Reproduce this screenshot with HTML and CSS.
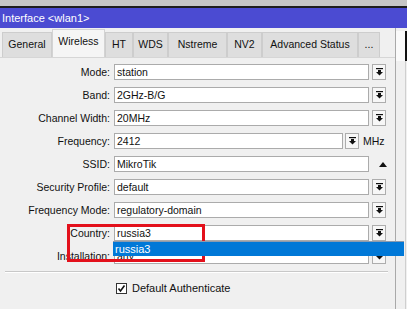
FILE: index.html
```html
<!DOCTYPE html>
<html lang="en">
<head>
  <meta charset="UTF-8">
  <meta name="viewport" content="width=device-width, initial-scale=1.0">
  <title>Interface &lt;wlan1&gt;</title>
  <link rel="stylesheet" href="styles.css">
</head>
<body>
  <div class="top-strip"></div>
  <div class="title-bar">Interface &lt;wlan1&gt;</div>

  <div class="window">
    <div class="main">
      <div class="tabs">
        <div class="tab tab-general">General</div>
        <div class="tab tab-wireless active">Wireless</div>
        <div class="tab tab-ht">HT</div>
        <div class="tab tab-wds">WDS</div>
        <div class="tab tab-nstreme">Nstreme</div>
        <div class="tab tab-nv2">NV2</div>
        <div class="tab tab-adv">Advanced Status</div>
        <div class="tab tab-more">...</div>
      </div>

      <div class="panel">
        <div class="form-row">
          <span class="label">Mode:</span>
          <span class="field">station</span>
          <span class="drop-btn"><svg width="7" height="8" viewBox="0 0 7 8"><rect x="0" y="0" width="7" height="1.2"/><rect x="2" y="2" width="3" height="2"/><polygon points="0,4 7,4 3.5,7.5"/></svg></span>
        </div>
        <div class="form-row">
          <span class="label">Band:</span>
          <span class="field">2GHz-B/G</span>
          <span class="drop-btn"><svg width="7" height="8" viewBox="0 0 7 8"><rect x="0" y="0" width="7" height="1.2"/><rect x="2" y="2" width="3" height="2"/><polygon points="0,4 7,4 3.5,7.5"/></svg></span>
        </div>
        <div class="form-row">
          <span class="label">Channel Width:</span>
          <span class="field">20MHz</span>
          <span class="drop-btn"><svg width="7" height="8" viewBox="0 0 7 8"><rect x="0" y="0" width="7" height="1.2"/><rect x="2" y="2" width="3" height="2"/><polygon points="0,4 7,4 3.5,7.5"/></svg></span>
        </div>
        <div class="form-row">
          <span class="label">Frequency:</span>
          <span class="field field-short">2412</span>
          <span class="drop-btn drop-btn-near"><svg width="7" height="8" viewBox="0 0 7 8"><rect x="0" y="0" width="7" height="1.2"/><rect x="2" y="2" width="3" height="2"/><polygon points="0,4 7,4 3.5,7.5"/></svg></span>
          <span class="unit">MHz</span>
        </div>
        <div class="form-row">
          <span class="label">SSID:</span>
          <span class="field">MikroTik</span>
          <span class="up-arrow"><svg width="8" height="5" viewBox="0 0 8 5"><polygon points="0,5 8,5 4,0"/></svg></span>
        </div>
        <div class="form-row">
          <span class="label">Security Profile:</span>
          <span class="field">default</span>
          <span class="drop-btn"><svg width="7" height="8" viewBox="0 0 7 8"><rect x="0" y="0" width="7" height="1.2"/><rect x="2" y="2" width="3" height="2"/><polygon points="0,4 7,4 3.5,7.5"/></svg></span>
        </div>
        <div class="form-row">
          <span class="label">Frequency Mode:</span>
          <span class="field">regulatory-domain</span>
          <span class="drop-btn"><svg width="7" height="8" viewBox="0 0 7 8"><rect x="0" y="0" width="7" height="1.2"/><rect x="2" y="2" width="3" height="2"/><polygon points="0,4 7,4 3.5,7.5"/></svg></span>
        </div>
        <div class="form-row">
          <span class="label">Country:</span>
          <span class="field">russia3</span>
          <span class="drop-btn"><svg width="7" height="8" viewBox="0 0 7 8"><rect x="0" y="0" width="7" height="1.2"/><rect x="2" y="2" width="3" height="2"/><polygon points="0,4 7,4 3.5,7.5"/></svg></span>
        </div>
        <div class="form-row">
          <span class="label">Installation:</span>
          <span class="field">any</span>
          <span class="drop-btn"><svg width="7" height="8" viewBox="0 0 7 8"><rect x="0" y="0" width="7" height="1.2"/><rect x="2" y="2" width="3" height="2"/><polygon points="0,4 7,4 3.5,7.5"/></svg></span>
        </div>

        <div class="separator"></div>

        <div class="check-row">
          <span class="checkbox"><svg width="9" height="9" viewBox="0 0 9 9"><polyline points="1.5,4.5 3.5,7 7.5,1.5" fill="none" stroke="#111" stroke-width="1.6"/></svg></span>
          <span>Default Authenticate</span>
        </div>
      </div>
    </div>

    <div class="side">
      <div class="side-top"></div>
      <div class="side-rest"></div>
    </div>
  </div>

  <div class="callout"></div>
  <div class="dropdown-list">russia3</div>
</body>
</html>
```

FILE: styles.css
```css
body {
  margin: 0;
  width: 407px;
  height: 309px;
  overflow: hidden;
  position: relative;
  background-color: #F0F0F0;
  font-family: "Liberation Sans", Arial, sans-serif;
  font-size: 10.5px;
  color: #111;
}
.top-strip {
  height: 6px;
  background-color: #C6C6C6;
  border-bottom: 2px solid #1E1E1E;
}
.title-bar {
  height: 20px;
  line-height: 20px;
  padding-left: 2px;
  background-color: #4B4BD2;
  color: #FFFFFF;
  font-size: 11px;
}
.window {
  display: flex;
  height: 281px;
}
.main {
  width: 395px;
}
.tabs {
  display: flex;
  align-items: flex-end;
  height: 29px;
  padding-left: 2px;
}
.tab {
  box-sizing: border-box;
  height: 25px;
  line-height: 23px;
  text-align: center;
  background-color: #DEDEDE;
  border: 1px solid #CDCDCD;
  border-bottom: none;
}
.tab.active {
  height: 28px;
  line-height: 22px;
  background-color: #F5F5F5;
  border-color: #D3D3D3;
}
.tab-general { width: 50px; }
.tab-wireless { width: 53px; }
.tab-ht { width: 28px; }
.tab-wds { width: 35px; }
.tab-nstreme { width: 59px; }
.tab-nv2 { width: 35px; }
.tab-adv { width: 96px; }
.tab-more { width: 22px; }
.panel {
  border-top: 1px solid #D6D6D6;
  padding-top: 6px;
}
.form-row {
  display: flex;
  align-items: center;
  height: 16px;
  margin-bottom: 7px;
}
.label {
  width: 110px;
  margin-right: 4px;
  text-align: right;
}
.field {
  box-sizing: border-box;
  width: 255px;
  height: 16px;
  line-height: 14px;
  padding-left: 2px;
  background-color: #FFFFFF;
  border: 1px solid #ABABAB;
}
.field-short {
  width: 229px;
}
.drop-btn {
  box-sizing: border-box;
  display: flex;
  align-items: center;
  justify-content: center;
  width: 14px;
  height: 16px;
  margin-left: 3px;
  background-color: #F7F7F7;
  border: 1px solid #ADADAD;
}
.drop-btn svg {
  fill: #111;
}
.drop-btn-near {
  margin-left: 2px;
}
.unit {
  margin-left: 4px;
}
.up-arrow {
  display: flex;
  justify-content: center;
  width: 14px;
  margin-left: 7px;
}
.up-arrow svg {
  fill: #111;
}
.separator {
  height: 1px;
  margin: 0 7px 0 5px;
  background-color: #C8C8C8;
  border-bottom: 1px solid #FFFFFF;
}
.check-row {
  display: flex;
  align-items: center;
  gap: 5px;
  margin-top: 9px;
  padding-left: 116px;
  font-size: 11px;
}
.checkbox {
  box-sizing: border-box;
  display: flex;
  align-items: center;
  justify-content: center;
  width: 11px;
  height: 11px;
  background-color: #FFFFFF;
  border: 1px solid #333333;
}
.side {
  flex: 1;
  border-left: 1px solid #A9A9A9;
  display: flex;
  flex-direction: column;
}
.side-top {
  height: 30px;
  margin-top: 3px;
  background-color: #FAFAFA;
  border-right: 2px solid #111111;
}
.side-rest {
  flex: 1;
  border-right: 1px solid #CFCFCF;
  margin-right: 1px;
}
.callout {
  position: absolute;
  left: 67px;
  top: 224px;
  width: 138px;
  height: 38px;
  box-sizing: border-box;
  border: 3px solid #E3101B;
}
.dropdown-list {
  position: absolute;
  left: 113px;
  top: 241px;
  width: 291px;
  height: 15px;
  box-sizing: border-box;
  padding-left: 2px;
  line-height: 14px;
  background-color: #0078D7;
  border-top: 1px solid #8C9BAE;
  color: #FFFFFF;
  font-size: 11px;
}
```
